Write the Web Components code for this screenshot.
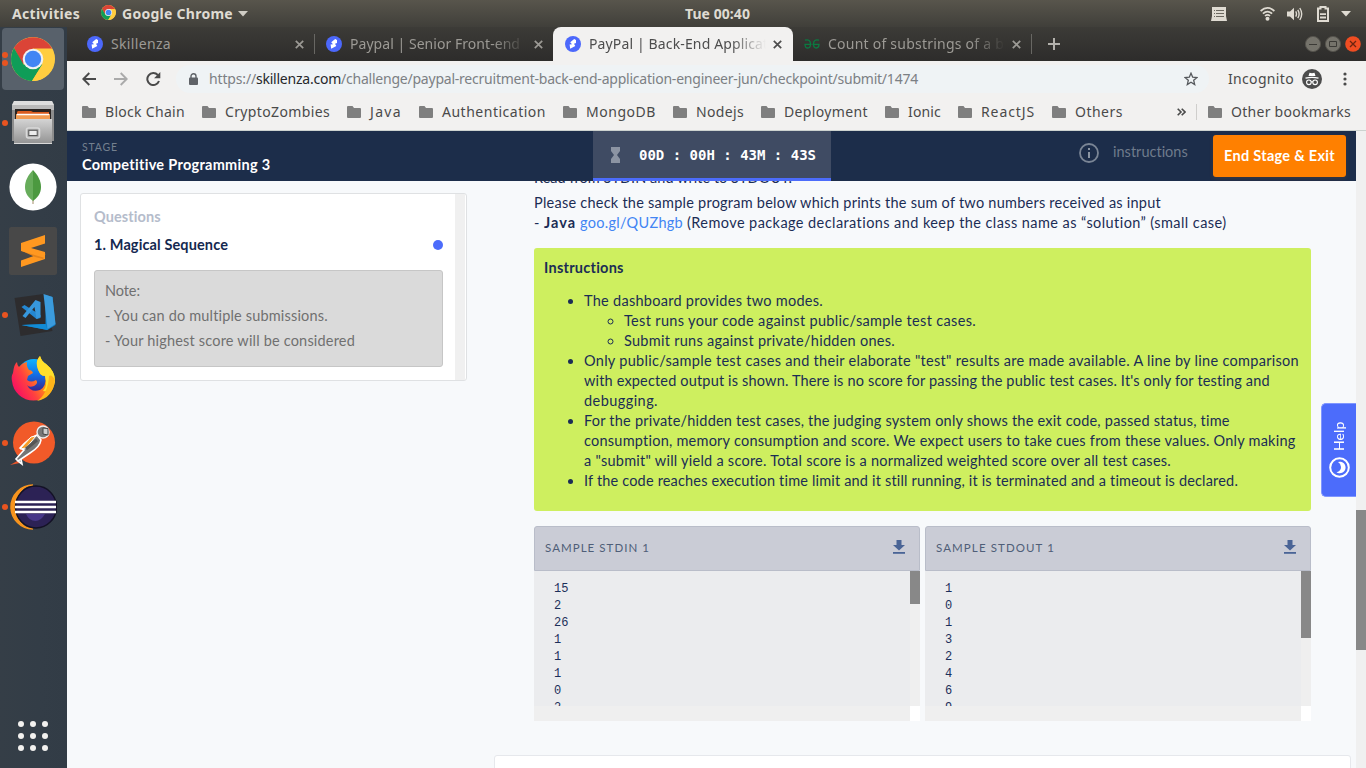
<!DOCTYPE html>
<html lang="en">
<head>
<meta charset="utf-8">
<title>PayPal | Back-End Application Engineer</title>
<style>
html,body{margin:0;padding:0}
body{width:1366px;height:768px;overflow:hidden;font-family:"Noto Sans","Open Sans",sans-serif;font-size:14px;background:#f7f9fb}
</style>
</head>
<body>
<desktop-shell></desktop-shell>
<script>
const define = (name, css, html, extra) => {
  customElements.define(name, class extends HTMLElement {
    constructor() {
      super();
      const root = this.attachShadow({ mode: 'open' });
      const markup = typeof html === 'function' ? html(this) : html;
      root.innerHTML = `<style>*{box-sizing:border-box}:host{box-sizing:border-box}svg{display:block;flex:none}${css}</style>${markup}`;
    }
    connectedCallback() { if (extra) extra(this); }
  });
};

/* A single line of text whose tracking is adjusted to fill the given width. */
define('fit-line', ':host{display:block;white-space:pre;flex:none}span{display:inline-block}', '<span><slot></slot></span>', el => {
  const w = parseFloat(el.getAttribute('w'));
  const span = el.shadowRoot.querySelector('span');
  el.style.width = w + 'px';
  span.style.letterSpacing = '0px';
  const n = el.textContent.length;
  const natural = span.getBoundingClientRect().width;
  if (n > 1) span.style.letterSpacing = ((w - natural) / n) + 'px';
});

const chromeLogo = s => `<svg width="${s}" height="${s}" viewBox="0 0 44 44">
<circle cx="22" cy="22" r="22" fill="#fc4"/>
<path d="M3 11A22 22 0 0 1 41.1 11.5H22L11.5 28Z" fill="#db4437"/>
<path d="M3 11A22 22 0 0 0 21 44L31.5 27.5 12.5 27.5Z" fill="#0f9d58"/>
<path d="M22 12H41.1A22 22 0 0 1 21 44L31.5 27Z" fill="#ffcd40"/>
<circle cx="22" cy="22" r="10.3" fill="#f1f1f1"/><circle cx="22" cy="22" r="8.2" fill="#4285f4"/></svg>`;

define('top-bar', `:host{display:flex;align-items:center;height:27px;padding:0 15px 0 12px;background:linear-gradient(#58554c,#403f3a);color:#dfdbd2;font-weight:700;line-height:27px;font-size:14px}
.l,.r{display:flex;align-items:center}.l{width:673px}.r{flex:1;justify-content:flex-end}fit-line{margin-top:-1px}`,
`<div class="l"><fit-line w="68">Activities</fit-line><svg style="margin:0 6px 0 21px" width="15" height="15" viewBox="0 0 15 15"></svg><fit-line w="111">Google Chrome</fit-line>
<svg style="margin-left:5px" width="10" height="6"><path d="M0 0H10L5 5.5Z" fill="#d0cdc5"/></svg></div>
<fit-line w="65">Tue 00:40</fit-line>
<div class="r">
<svg width="16" height="14" viewBox="0 0 16 14"><path d="M1 0H15V9L16 14H0L1 9Z" fill="#dfdbd2"/><path d="M3 3.5H4M5 3.5H13M3 6.5H4M5 6.5H13M3 9.5H4M5 9.5H13" stroke="#6b6860"/></svg>
<svg style="margin-left:33px" width="15" height="14" viewBox="0 0 15 14"><g fill="none" stroke="#dfdbd2" stroke-width="1.7"><path d="M.6 4Q7.5-2.2 14.4 4"/><path d="M2.9 6.7Q7.5 2.5 12.1 6.7"/><path d="M5 9Q7.5 6.6 10 9"/></g><circle cx="7.5" cy="11.7" r="2" fill="#dfdbd2"/></svg>
<svg style="margin-left:12px" width="16" height="14" viewBox="0 0 16 14"><path d="M0 4.5H3L7 .8V13.2L3 9.5H0Z" fill="#dfdbd2"/><path d="M8.7 4.4Q10.3 7 8.7 9.6M10.8 2.8Q13.4 7 10.8 11.2M12.8 1Q16.6 7 12.8 13" fill="none" stroke="#dfdbd2" stroke-width="1.4"/></svg>
<svg style="margin-left:14px" width="12" height="16" viewBox="0 0 12 16"><path d="M1 2.5H3.5V1H8.5V2.5H11V15H1Z" fill="none" stroke="#dfdbd2" stroke-width="2"/><path d="M3 8.2H9M3 11.5H9" stroke="#dfdbd2" stroke-width="1.8"/></svg>
<svg style="margin-left:12px" width="10" height="6"><path d="M0 0H10L5 5.5Z" fill="#dfdbd2"/></svg>
</div>`, el => {
  el.shadowRoot.querySelector('.l svg').outerHTML = `<span style="margin:-2px 6px 0 21px">${chromeLogo(15)}</span>`;
});

define('dock-item', `:host{display:flex;position:relative;width:62px;height:62px;margin:0 0 2px 2px;border-radius:4px;align-items:center;justify-content:center}
:host([active]){background:#58616b}
i{position:absolute;left:0;width:6px;height:6px;border-radius:50%;background:#e95420;top:28px}
i.a{top:24px}i.b{top:32px}`,
el => `<slot></slot>${el.getAttribute('dots') === '2' ? '<i class="a"></i><i class="b"></i>' : el.getAttribute('dots') === '1' ? '<i></i>' : ''}`);

define('app-dock', `:host{display:flex;flex-direction:column;width:67px;flex:none;padding-top:1px;background:linear-gradient(90deg,#353e47,#333d47 60%,#323c46)}
.grid{display:grid;grid-template-columns:repeat(3,6px);gap:6px;margin:auto 0 17px 18px}
.grid b{width:6px;height:6px;border-radius:50%;background:#f2f1ef}`,
`<dock-item active dots="2">${chromeLogo(44)}</dock-item>
<dock-item dots="1"><svg width="44" height="46" viewBox="0 0 44 46"><defs><linearGradient id="c" x2="0" y2="1"><stop stop-color="#d4d4d4"/><stop offset="1" stop-color="#929292"/></linearGradient></defs>
<path d="M3 1H41L43 5V41H1V5Z" fill="#8d8d8d"/><path d="M3 1H41L43 5H1Z" fill="#dedede"/><path d="M1 5H43V10H1Z" fill="#bababa"/><path d="M4 9H40V20H4Z" fill="#292422"/><path d="M6 12L7 11H20L22 12H38V19H6Z" fill="#d95b1e"/><path d="M5 14H39V20H5Z" fill="#f29b52"/><path d="M6 14.5H38" stroke="#fff" stroke-width="1.5"/><path d="M3 19H41V44H3Z" fill="url(#c)"/><path d="M3 43.5H41" stroke="#dadada"/><rect x="15.5" y="28" width="13" height="10" rx="2" fill="#aaa" stroke="#d9d9d9" stroke-width="1.6"/><rect x="17.8" y="30.3" width="8.4" height="5.2" fill="#ececec" stroke="#565656"/></svg></dock-item>
<dock-item><svg width="48" height="48" viewBox="0 0 48 48"><circle cx="24" cy="24" r="23.6" fill="#fff"/><path d="M24 36V41" stroke="#b8a88a" stroke-width="1.3"/><path d="M24 7C29 12 32 18 32 24 32 31 28 35 24 38Z" fill="#4c9940"/><path d="M24 7C19 12 16 18 16 24 16 31 20 35 24 38Z" fill="#67ac5b"/></svg></dock-item>
<dock-item><svg width="48" height="48" viewBox="0 0 48 48"><rect width="48" height="48" rx="2.5" fill="#484848"/><path d="M12 33.5L36 25V32L12 40Z" fill="#ff9820"/><path d="M12 23.5L20 21 36 26Q37 29 34 32L26 30Z" fill="#e5841b"/><path d="M12 16L36 8V16.5L22 21 36 25V31L12 24Z" fill="#ff9820"/></svg></dock-item>
<dock-item dots="1"><svg width="44" height="46" viewBox="0 0 44 46" style="margin-left:2px"><g transform="translate(2.5 1)"><path d="M0 5L29 1 38 38 6 43Z" fill="#2d2c2e"/><path d="M7 32L31 31V2L38 4 41 32 33 37Z" fill="#0e7fc8"/><path d="M29 1L38 4 41 31 33 36Z" fill="#3b9bdc"/><path d="M7 32L31 31 33 37Z" fill="#128bd4"/><path d="M7 14L10 12 26 22V25L22 26Z" fill="#2487d2"/><path d="M21 7L26 9V24L22 26 20 14 11 25 8 23Z" fill="#3797dc"/></g></svg></dock-item>
<dock-item><svg width="44" height="46" viewBox="0 0 44 46"><defs><linearGradient id="f" x1="0" y1=".8" x2="1" y2=".2"><stop stop-color="#f50669"/><stop offset=".35" stop-color="#ff4040"/><stop offset=".65" stop-color="#ff9a10"/><stop offset="1" stop-color="#fff22c"/></linearGradient><linearGradient id="g" x2="0" y2="1"><stop stop-color="#0fb3ff"/><stop offset=".45" stop-color="#1270e8"/><stop offset="1" stop-color="#3b1c86"/></linearGradient></defs><circle cx="23" cy="20" r="17" fill="url(#g)"/><path d="M2 17Q3 8 6 6Q6 9 8 11Q11 7 16 6Q15 10 18 14Q21 14 22 17L17 20 16 24Q20 27 25 24Q28 27 23 30Q18 32 16 29Q20 37 29 34Q36 30 34 20Q28 20 26 10Q25 4 29 0Q31 6 35 8Q44 15 44 25A21.6 21.6 0 0 1 1 25Q0 20 2 17Z" fill="url(#f)"/><path d="M29 0Q31 6 35 8Q44 15 44 25Q41 37 32 35Q37 30 34 20Q28 20 26 10Q25 4 29 0Z" fill="#ffdf2b"/><path d="M44 24Q42 42 26 45Q37 38 38 20Q41 18 44 24Z" fill="#ffb51a"/></svg></dock-item>
<dock-item dots="1"><svg width="46" height="46" viewBox="0 0 46 46"><circle cx="24" cy="22.5" r="21" fill="#f15a29"/><path d="M0 45L9 40 10 43Z" fill="#e8562c"/><path d="M27 15Q19 18 10 28L14 30 6 39 8 41 11 39 12 44 8 41 20 33Q30 27 31 20Z" fill="#757575" stroke="#fff" stroke-width="1.6"/><path d="M26 16L21 17 10 29 16 28Z" fill="#f89c26" stroke="#fff"/><path d="M16 29L27 20" stroke="#555" stroke-width="3"/><circle cx="33" cy="12" r="6" fill="#777" stroke="#eee" stroke-width="1.4"/><path d="M33 8L38 8.5V15L33 14Z" fill="#cfcfcf" stroke="#444"/></svg></dock-item>
<dock-item dots="1"><svg width="48" height="46" viewBox="0 0 48 46"><path d="M24 1A22 22 0 0 0 24 45A18 22 0 0 1 24 1Z" fill="#f7941e" stroke="#f7941e" stroke-width="1.5"/><ellipse cx="27" cy="23" rx="20.5" ry="21" fill="#2c2255" stroke="#141226" stroke-width="1.4"/><path d="M17 30H36Q32 37 26.5 37 20 37 17 30Z" fill="#473788"/><path d="M6 18H47M6 23H47M6 28H47" stroke="#fff" stroke-width="2.5"/></svg></dock-item>
<div class="grid">${'<b></b>'.repeat(9)}</div>`);

define('site-icon', ':host{display:block;width:16px;height:16px;flex:none}', el => el.hasAttribute('gfg')
 ? `<svg width="16" height="16" viewBox="0 0 16 16"><path d="M1 4.2Q6.5 2.8 6.5 8Q6.5 12 3.8 12Q1 12 1 8.3H7.5M15 4.2Q9.5 2.8 9.5 8Q9.5 12 12.2 12Q15 12 15 8.3H8.5" fill="none" stroke="#0b7a41" stroke-width="1.3"/></svg>`
 : `<svg width="16" height="16" viewBox="0 0 16 16"><circle cx="8" cy="8" r="8" fill="#4c68fb"/><path d="M9.2 3L5.2 6.2 7 8.2 4.6 8.6 5.2 12.8 10.3 9.9 9 7.7 11 7 11 4Z" fill="#fff"/></svg>`);

define('browser-tab', `:host{display:flex;position:relative;align-items:center;width:239px;height:34px;padding:0 10px 0 12px;color:#9c9a95;line-height:34px;font-size:14px;flex:none}
:host([active]){background:#f2f1f0;color:#4d4d4d;border-radius:8px 8px 0 0;width:240px;margin-right:-1px}
:host([sep])::after{content:"";position:absolute;right:-1px;top:7px;height:20px;width:1px;background:#686763}
.t{width:178px;margin-left:8px;overflow:hidden}
:host([fade]) .t{mask-image:linear-gradient(90deg,#000 142px,transparent 177px)}
svg{margin-left:6px}`,
`<slot name="icon"></slot><div class="t"><slot></slot></div><svg width="9" height="9" viewBox="0 0 9 9"><path d="M.8.8L8.2 8.2M8.2.8L.8 8.2" stroke="currentColor" stroke-width="1.7"/></svg>`);

define('tab-strip', `:host{display:flex;align-items:center;height:34px;padding:0 5px 0 8px;background:linear-gradient(#3c3b37,#2d2c2b)}
.w{margin-left:auto;display:flex;gap:4px}`,
`<browser-tab sep><site-icon slot="icon"></site-icon><fit-line w="60">Skillenza</fit-line></browser-tab>
<browser-tab fade><site-icon slot="icon"></site-icon><fit-line w="170">Paypal | Senior Front-end</fit-line></browser-tab>
<browser-tab active fade><site-icon slot="icon"></site-icon><fit-line w="183">PayPal | Back-End Applicati</fit-line></browser-tab>
<browser-tab sep fade><site-icon gfg slot="icon"></site-icon><fit-line w="176">Count of substrings of a b</fit-line></browser-tab>
<svg style="margin-left:17px" width="12" height="12"><path d="M6 0V12M0 6H12" stroke="#b3b1ac" stroke-width="2"/></svg>
<div class="w">
<svg width="16" height="16"><circle cx="8" cy="8" r="7.6" fill="#75736b" stroke="#55534d"/><path d="M4 8.5H12" stroke="#3b3a36"/></svg>
<svg width="16" height="16"><circle cx="8" cy="8" r="7.6" fill="#75736b" stroke="#55534d"/><path d="M4.5 5.5H11.5V10.5H4.5Z" fill="none" stroke="#3b3a36"/></svg>
<svg width="16" height="16"><circle cx="8" cy="8" r="7.8" fill="#f04d22"/><path d="M5 5L11 11M11 5L5 11" stroke="#6b2410" stroke-width="1.3"/></svg></div>`);

define('nav-bar', `:host{display:flex;align-items:center;height:35px;padding:0 19px 0 15px;background:#f2f1f0;color:#4a4a4a}
.box{display:flex;align-items:center;width:1033px;height:28px;border-radius:14px;background:#eff3f5;margin-left:15px;padding:0 11px 0 13px;line-height:28px;color:#7c8084}
.box b{font-weight:400;color:#26282b}`,
`<svg width="14" height="14" viewBox="0 0 14 14"><path d="M14 7H1.5M7.3 1L1.3 7 7.3 13" fill="none" stroke="#4a4a4a" stroke-width="1.9"/></svg>
<svg style="margin-left:18px" width="14" height="14" viewBox="0 0 14 14"><path d="M0 7H12.5M6.7 1L12.7 7 6.7 13" fill="none" stroke="#aaa" stroke-width="1.9"/></svg>
<svg style="margin-left:18px" width="15" height="14" viewBox="0 0 15 14"><path d="M11.8 3A6 6 0 1 0 13 9" fill="none" stroke="#4a4a4a" stroke-width="2"/><path d="M14.3 0V6.2H8.1Z" fill="#4a4a4a"/></svg>
<div class="box"><svg width="9" height="12" viewBox="0 0 9 12"><rect y="4.5" width="9" height="7.5" rx="1" fill="#5f6368"/><path d="M2 5V3.2A2.5 2.5 0 0 1 7 3.2V5" fill="none" stroke="#5f6368" stroke-width="1.4"/></svg>
<fit-line w="47" style="margin-left:11px">https://</fit-line><b><fit-line w="85">skillenza.com</fit-line></b><fit-line w="577">/challenge/paypal-recruitment-back-end-application-engineer-jun/checkpoint/submit/1474</fit-line>
<svg style="margin-left:auto" width="14" height="14" viewBox="0 0 14 14"><path d="M7 1.2L8.7 5.2 13 5.5 9.7 8.3 10.7 12.6 7 10.3 3.3 12.6 4.3 8.3 1 5.5 5.3 5.2Z" fill="none" stroke="#55585c" stroke-width="1.3"/></svg></div>
<fit-line w="66" style="margin-left:19px">Incognito</fit-line>
<svg style="margin-left:8px" width="20" height="20" viewBox="0 0 20 20"><circle cx="10" cy="10" r="10" fill="#4d4d4d"/><path d="M6.5 7L7.5 3.7Q10 4.6 12.5 3.7L13.5 7Z" fill="#fff"/><path d="M3.5 9.2Q10 7.4 16.5 9.2" fill="none" stroke="#fff" stroke-width="1.2"/><circle cx="6.9" cy="13.3" r="2.3" fill="none" stroke="#fff" stroke-width="1.1"/><circle cx="13.1" cy="13.3" r="2.3" fill="none" stroke="#fff" stroke-width="1.1"/><path d="M9 13Q10 12.3 11 13" stroke="#fff" fill="none"/></svg>
<svg style="margin-left:auto" width="4" height="14"><circle cx="2" cy="2" r="1.6" fill="#4a4a4a"/><circle cx="2" cy="7" r="1.6" fill="#4a4a4a"/><circle cx="2" cy="12" r="1.6" fill="#4a4a4a"/></svg>`);

define('book-mark', ':host{display:flex;align-items:center;gap:9px;line-height:32px;flex:none}',
el => `<svg width="14" height="12" viewBox="0 0 14 12"><path d="M1 0H5.5L7 2H13Q14 2 14 3V11Q14 12 13 12H1Q0 12 0 11V1Q0 0 1 0Z" fill="#7f7f7f"/></svg><fit-line w="${el.getAttribute('w')}"><slot></slot></fit-line>`,
 el => { const f = el.shadowRoot.querySelector('fit-line'), s = f.shadowRoot.querySelector('span');
  s.style.letterSpacing = '0px';
  s.style.letterSpacing = (el.getAttribute('w') - s.getBoundingClientRect().width) / el.textContent.length + 'px'; });

define('bookmark-bar', `:host{display:flex;align-items:center;height:35px;padding:0 15px 2px 15px;background:#f2f1f0;border-bottom:1px solid #ccd2cf;color:#4a4a4a}
.m{display:flex;gap:17px;flex:1}hr{width:1px;height:16px;border:0;background:#cfcecc;margin:0 11px 0 10px}`,
`<div class="m">${[['Block Chain',80],['CryptoZombies',105],['Java',32],['Authentication',104],['MongoDB',70],['Nodejs',48],['Deployment',84],['Ionic',33],['ReactJS',54],['Others',48]].map(([t,w])=>`<book-mark w="${w}">${t}</book-mark>`).join('')}</div>
<svg width="9" height="8" viewBox="0 0 9 8"><path d="M.7.7L4 4 .7 7.3M4.7.7L8 4 4.7 7.3" fill="none" stroke="#4a4a4a" stroke-width="1.6"/></svg><hr><book-mark w="120">Other bookmarks</book-mark>`);

define('stage-header', `:host{display:flex;height:50px;background:#1c2d4a;color:#fff;font-family:Lato,sans-serif;flex:none}
.s{width:526px;padding:9px 0 0 15px}.s small{display:block;font-size:10.5px;line-height:14px;color:#74808f}
.s strong{display:block;font-size:14.5px;line-height:20px;margin-top:1px}
.t{display:flex;align-items:center;width:238px;background:#3f4b63;border-bottom:3px solid #4c6cfb;padding:1px 0 0 18px;font:700 14px/20px "DejaVu Sans Mono",monospace}
.t fit-line{margin-left:19px}
.i{display:flex;margin-left:248px;color:#6f7b8c;font-size:14.5px;line-height:20px;padding-top:12px}
.i fit-line{margin:-1px 0 0 14px}
button{all:unset;box-sizing:border-box;width:133px;height:42px;margin:4px 0 0 25px;padding-left:11px;background:#ff8000;border-radius:3px;font-weight:700;font-size:14.5px;line-height:42px;box-shadow:0 2px 4px #ff80001c}`,
`<div class="s"><small><fit-line w="36">STAGE</fit-line></small><strong><fit-line w="189">Competitive Programming 3</fit-line></strong></div>
<div class="t"><svg width="9" height="16" viewBox="0 0 9 16"><path d="M0 0H9V4L6 8 9 12V16H0V12L3 8 0 4Z" fill="#8c94a3"/></svg><fit-line w="177">00D : 00H : 43M : 43S</fit-line></div>
<div class="i"><svg width="20" height="20"><circle cx="10" cy="10" r="9" fill="none" stroke="#7a8595" stroke-width="1.8"/><path d="M10 5V7M10 9V15" stroke="#8b95a3" stroke-width="2"/></svg><fit-line w="75">instructions</fit-line></div>
<button><fit-line w="111">End Stage &amp; Exit</fit-line></button>`);

define('question-panel', `:host{display:flex;width:387px;height:188px;border:1px solid #dfe1e3;border-radius:3px;background:#fff;flex:none}
.c{flex:1;padding:13px 12px 0 13px}.sb{width:10px;background:#f0f0f0;margin-right:1px}
h4{margin:0;font-size:14.5px;line-height:20px;color:#b5bccb}
.q{display:flex;justify-content:space-between;align-items:center;margin-top:8px;font-weight:700;font-size:14.5px;line-height:20px;color:#14284f}
.q i{width:10px;height:10px;border-radius:50%;background:#4c6cfb}
.n{margin-top:15px;height:97px;padding:7px 10px;background:#dadada;border:1px solid #c6c6c6;border-radius:3px;color:#707070;line-height:25px;font-size:14.5px}`,
`<div class="c"><h4><fit-line w="67">Questions</fit-line></h4><div class="q"><fit-line w="134">1. Magical Sequence</fit-line><i></i></div>
<div class="n"><fit-line w="35">Note:</fit-line><fit-line w="223">- You can do multiple submissions.</fit-line><fit-line w="250">- Your highest score will be considered</fit-line></div></div><div class="sb"></div>`);

define('instruction-box', `:host{display:block;height:263px;margin-top:15px;padding:10px;background:#ceef5f;border-radius:3px}
h5{margin:0 0 13px;font-size:14.5px;line-height:20px}ul{margin:0;padding-left:40px}`,
`<h5><fit-line w="80">Instructions</fit-line></h5><ul>
<li><fit-line w="239">The dashboard provides two modes.</fit-line><ul><li><fit-line w="352">Test runs your code against public/sample test cases.</fit-line></li><li><fit-line w="271">Submit runs against private/hidden ones.</fit-line></li></ul></li>
<li><fit-line w="715">Only public/sample test cases and their elaborate "test" results are made available. A line by line comparison</fit-line><fit-line w="686">with expected output is shown. There is no score for passing the public test cases. It's only for testing and</fit-line><fit-line w="74">debugging.</fit-line></li>
<li><fit-line w="646">For the private/hidden test cases, the judging system only shows the exit code, passed status, time</fit-line><fit-line w="712">consumption, memory consumption and score. We expect users to take cues from these values. Only making</fit-line><fit-line w="587">a "submit" will yield a score. Total score is a normalized weighted score over all test cases.</fit-line></li>
<li><fit-line w="655">If the code reaches execution time limit and it still running, it is terminated and a timeout is declared.</fit-line></li></ul>`);

define('sample-box', `:host{display:block;width:386px;height:195px}
.h{display:flex;align-items:center;justify-content:space-between;height:45px;padding:0 14px 2px 10px;border:1px solid #b9bdc9;border-radius:3px 3px 0 0;background:#caccd6;color:#4f5e78;font-size:11.5px;line-height:20px}
.b{display:grid;grid-template-columns:1fr 10px;grid-template-rows:135px 15px;background:#efefef}
pre{margin:0;padding:10px 20px 0;overflow:hidden;background:#ebecee;font:12px/17px "Liberation Mono",monospace;color:#1c2f5a}
.v i{display:block;background:#888}.k{grid-column:2;background:#fff}`,
el => `<div class="h"><fit-line w="${el.getAttribute('w')}">${el.getAttribute('label')}</fit-line><svg style="margin-top:-2px" width="12" height="14" viewBox="0 0 12 14"><path d="M3.5 0H8.5V5H12L6 10.6 0 5H3.5Z" fill="#4a6496"/><path d="M0 12.9H12" stroke="#4a6496" stroke-width="1.8"/></svg></div>
<div class="b"><pre>${el.getAttribute('lines').split(',').join('\n')}</pre><div class="v"><i style="height:${el.getAttribute('thumb')}px"></i></div><div class="k"></div></div>`);

define('help-tab', `:host{position:absolute;right:10px;top:272px;width:35px;height:94px;background:#4c6cfb;border:1px solid #7f96ff;border-right:0;border-radius:5px 0 0 5px;display:flex;flex-direction:column;align-items:center;color:#fff;padding-top:17px;font-size:14px}
.v{writing-mode:vertical-rl;transform:rotate(180deg);height:30px;line-height:20px;letter-spacing:.1px}svg{margin-top:6px}`,
`<div class="v">Help</div><svg width="21" height="21"><circle cx="10.5" cy="10.5" r="9.3" fill="none" stroke="#fff" stroke-width="2"/><path d="M9 5A5.8 5.8 0 1 1 7.5 15.3Q12.2 14 12 10 11.7 6.5 9 5Z" fill="#fff"/></svg>`);

define('challenge-page', `:host{display:flex;position:relative;height:637px;background:#f7f9fb;font-family:Lato,"Open Sans",sans-serif;font-size:14.5px;line-height:20px;color:#1b2d55}
.p{flex:1;display:flex;flex-direction:column}
.v{flex:1;display:flex;overflow:hidden;min-height:0;padding-left:13px}
question-panel{margin-top:12px}
main{margin-left:27px;width:857px}
.in{padding:0 40px;margin-top:-13px}
.r{display:flex}.r a{color:#4285f4}
.g{display:flex;gap:5px;margin-top:15px}
.c{height:40px;margin-top:34px;background:#fff;border:1px solid #e6e8ec;border-radius:3px}
.s{width:10px;background:#f0f0f0;padding-top:379px}.s i{display:block;height:140px;background:#888}`,
`<div class="p"><stage-header></stage-header><div class="v"><question-panel></question-panel><main><div class="in">
<fit-line w="258">Read from STDIN and write to STDOUT.</fit-line>
<fit-line style="margin-top:5px" w="627">Please check the sample program below which prints the sum of two numbers received as input</fit-line>
<div class="r"><fit-line w="10">- </fit-line><b><fit-line w="32">Java</fit-line></b><a><fit-line style="margin-left:4px" w="103">goo.gl/QUZhgb</fit-line></a><fit-line style="margin-left:4px" w="540">(Remove package declarations and keep the class name as “solution” (small case)</fit-line></div>
<instruction-box></instruction-box>
<div class="g"><sample-box label="SAMPLE STDIN 1" w="105" thumb="33" lines="15,2,26,1,1,1,0,2"></sample-box><sample-box label="SAMPLE STDOUT 1" w="119" thumb="67" lines="1,0,1,3,2,4,6,9"></sample-box></div>
</div><div class="c"></div></main></div></div><div class="s"><i></i></div><help-tab></help-tab>`);

define('desktop-shell', `:host{display:flex;flex-direction:column;width:1366px;height:768px;overflow:hidden}
.row{display:flex;flex:1}.win{flex:1;min-width:0}`,
`<top-bar></top-bar><div class="row"><app-dock></app-dock><div class="win"><tab-strip></tab-strip><nav-bar></nav-bar><bookmark-bar></bookmark-bar><challenge-page></challenge-page></div></div>`);
</script>
</body>
</html>
